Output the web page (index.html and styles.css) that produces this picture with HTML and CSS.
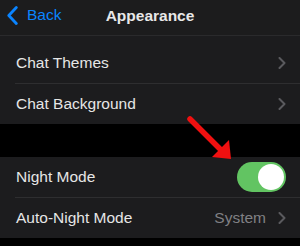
FILE: index.html
```html
<!DOCTYPE html>
<html>
<head>
<meta charset="utf-8">
<link rel="stylesheet" href="styles.css">
</head>
<body>
<div class="screen">
  <header class="nav">
    <div class="back">
      <svg class="back-chev" width="11" height="19" viewBox="0 0 11 19"><path d="M9.3 1.5 L1.8 9.5 L9.3 17.5" fill="none" stroke="#0a84ff" stroke-width="2.8" stroke-linecap="round" stroke-linejoin="round"/></svg>
      <span>Back</span>
    </div>
    <div class="title">Appearance</div>
  </header>
  <div class="group first">
    <div class="row">
      <span class="label">Chat Themes</span>
      <svg class="chev" width="8" height="12" viewBox="0 0 8 12"><path d="M1.5 1 L6.5 6 L1.5 11" fill="none" stroke="#5a5a5e" stroke-width="2" stroke-linecap="round" stroke-linejoin="round"/></svg>
    </div>
    <div class="sep"></div>
    <div class="row">
      <span class="label">Chat Background</span>
      <svg class="chev" width="8" height="12" viewBox="0 0 8 12"><path d="M1.5 1 L6.5 6 L1.5 11" fill="none" stroke="#5a5a5e" stroke-width="2" stroke-linecap="round" stroke-linejoin="round"/></svg>
    </div>
  </div>
  <div class="gap"></div>
  <div class="group">
    <div class="row">
      <span class="label">Night Mode</span>
      <div class="toggle"><div class="knob"></div></div>
    </div>
    <div class="sep"></div>
    <div class="row">
      <span class="label">Auto-Night Mode</span>
      <div class="value">
        <span>System</span>
        <svg class="chev" width="8" height="12" viewBox="0 0 8 12"><path d="M1.5 1 L6.5 6 L1.5 11" fill="none" stroke="#5a5a5e" stroke-width="2" stroke-linecap="round" stroke-linejoin="round"/></svg>
      </div>
    </div>
  </div>
  <svg class="arrow" width="300" height="246" viewBox="0 0 300 246">
    <line x1="190" y1="119" x2="220" y2="149" stroke="#f01010" stroke-width="5.5" stroke-linecap="round"/>
    <polygon points="231,159 212,157 229,140" fill="#f01010"/>
  </svg>
</div>
</body>
</html>
```
FILE: styles.css
```css
html, body {
  margin: 0;
  padding: 0;
  background: #000;
}
.screen {
  position: relative;
  width: 300px;
  height: 246px;
  overflow: hidden;
  background: #000;
  font-family: "Liberation Sans", Arial, sans-serif;
  color: #e6e6e6;
}
.nav {
  position: relative;
  height: 31px;
  padding-bottom: 4px;
  background: #1c1c1d;
  border-bottom: 1px solid #2a2a2c;
  display: flex;
  align-items: center;
  justify-content: center;
}
.back {
  position: absolute;
  left: 7px;
  top: 6px;
  display: flex;
  align-items: center;
  gap: 9px;
  color: #0a84ff;
  font-size: 15.5px;
}
.back span {
  margin-top: -1px;
}
.title {
  font-size: 15.5px;
  font-weight: 700;
  color: #e8e8e8;
}
.group {
  background: #1c1c1e;
}
.group.first {
  padding-top: 7px;
}
.row {
  height: 40px;
  display: flex;
  align-items: center;
  justify-content: space-between;
  padding: 0 14px 0 16px;
}
.label {
  font-size: 15.5px;
}
.sep {
  height: 1px;
  margin-left: 15px;
  background: #2e2e30;
}
.gap {
  height: 33px;
}
.chev {
  display: block;
}
.value {
  display: flex;
  align-items: center;
  gap: 12px;
  color: #808084;
  font-size: 15.5px;
}
.toggle {
  width: 49px;
  height: 30px;
  border-radius: 15px;
  background: #62c462;
  display: flex;
  align-items: center;
  justify-content: flex-end;
  padding: 0 2px;
  box-sizing: border-box;
}
.knob {
  width: 26px;
  height: 26px;
  border-radius: 50%;
  background: #fff;
}
.arrow {
  position: absolute;
  left: 0;
  top: 0;
  pointer-events: none;
}
```
